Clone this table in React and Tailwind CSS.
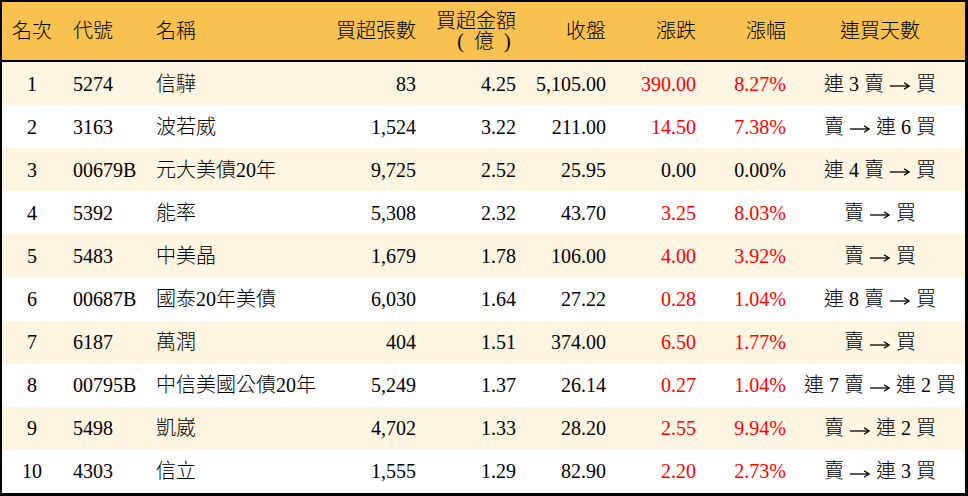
import React from "react";

const rows = [
  ["1", "5274", "信驊", "83", "4.25", "5,105.00", "390.00", "8.27%", "連 3 賣 → 買", true],
  ["2", "3163", "波若威", "1,524", "3.22", "211.00", "14.50", "7.38%", "賣 → 連 6 買", true],
  ["3", "00679B", "元大美債20年", "9,725", "2.52", "25.95", "0.00", "0.00%", "連 4 賣 → 買", false],
  ["4", "5392", "能率", "5,308", "2.32", "43.70", "3.25", "8.03%", "賣 → 買", true],
  ["5", "5483", "中美晶", "1,679", "1.78", "106.00", "4.00", "3.92%", "賣 → 買", true],
  ["6", "00687B", "國泰20年美債", "6,030", "1.64", "27.22", "0.28", "1.04%", "連 8 賣 → 買", true],
  ["7", "6187", "萬潤", "404", "1.51", "374.00", "6.50", "1.77%", "賣 → 買", true],
  ["8", "00795B", "中信美國公債20年", "5,249", "1.37", "26.14", "0.27", "1.04%", "連 7 賣 → 連 2 買", true],
  ["9", "5498", "凱崴", "4,702", "1.33", "28.20", "2.55", "9.94%", "賣 → 連 2 買", true],
  ["10", "4303", "信立", "1,555", "1.29", "82.90", "2.20", "2.73%", "賣 → 連 3 買", true],
];

const font = {
  fontFamily: '"Liberation Serif", "Noto Sans CJK TC", serif',
};

// split the streak text so the arrow can be drawn wide like the reference
const Streak = ({ text }) => {
  const parts = text.split("→");
  return (
    <span className="whitespace-pre">
      {parts[0]}
      <span className="inline-block align-middle mx-[1px]">
        <svg width="20" height="10" viewBox="0 0 20 10" className="block">
          <path d="M0 5H18" stroke="black" strokeWidth="1.3" />
          <path d="M14 1.8L19 5L14 8.2" fill="none" stroke="black" strokeWidth="1.3" />
        </svg>
      </span>
      {parts[1]}
    </span>
  );
};

const App = () => {
  return (
    <div
      className="w-[968px] h-[496px] flex flex-col border-t-2 border-l-2 border-r-[3px] border-b-[3px] border-black text-[20px] font-light text-black bg-white"
      style={font}
    >
      {/* Header */}
      <div className="h-[60px] flex items-center bg-[#F8C150] border-b-2 border-black leading-[20px]">
        <div className="w-[60px] text-center">名次</div>
        <div className="w-[94px] pl-[11px]">代號</div>
        <div className="w-[160px]">名稱</div>
        <div className="w-[100px] text-right">買超張數</div>
        <div className="w-[100px] flex flex-col items-center pl-[20px] whitespace-pre">
          <span>買超金額</span>
          <span className="ml-[16px]">(  億  )</span>
        </div>
        <div className="w-[90px] text-right">收盤</div>
        <div className="w-[90px] text-right">漲跌</div>
        <div className="w-[90px] text-right">漲幅</div>
        <div className="w-[179px] pl-[9px] text-center">連買天數</div>
      </div>

      {/* Rows */}
      {rows.map((r, i) => (
        <div
          key={r[0]}
          className={`flex-1 flex items-center ${i % 2 === 0 ? "bg-[#FEF5E2]" : "bg-white"}`}
        >
          <div className="w-[60px] text-center">{r[0]}</div>
          <div className="w-[94px] pl-[11px]">{r[1]}</div>
          <div className="w-[160px] whitespace-nowrap">{r[2]}</div>
          <div className="w-[100px] text-right">{r[3]}</div>
          <div className="w-[100px] text-right">{r[4]}</div>
          <div className="w-[90px] text-right">{r[5]}</div>
          <div className={`w-[90px] text-right ${r[9] ? "text-[#FF0000]" : ""}`}>{r[6]}</div>
          <div className={`w-[90px] text-right ${r[9] ? "text-[#FF0000]" : ""}`}>{r[7]}</div>
          <div className="w-[179px] pl-[9px] text-center">
            <Streak text={r[8]} />
          </div>
        </div>
      ))}
    </div>
  );
};

export default App;
